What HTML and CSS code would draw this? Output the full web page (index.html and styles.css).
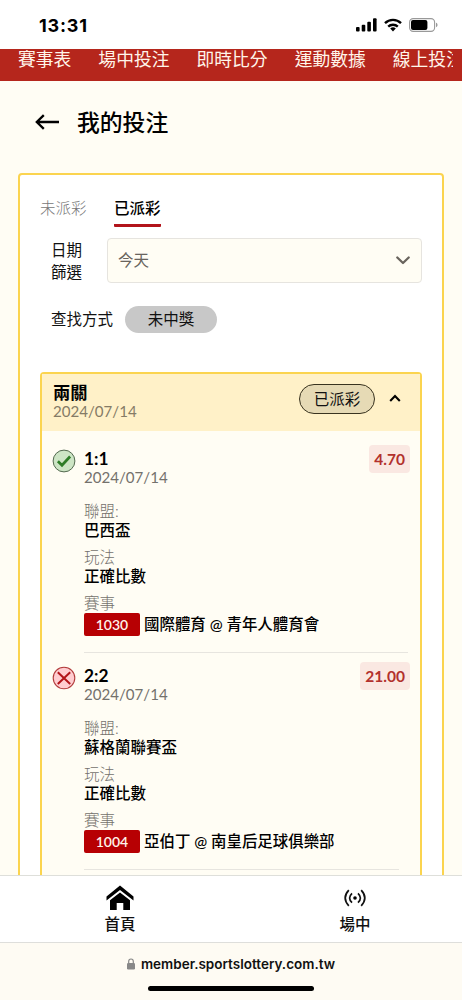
FILE: index.html
```html
<!DOCTYPE html>
<html lang="zh-Hant">
<head>
<meta charset="utf-8">
<title>我的投注</title>
<link rel="stylesheet" href="styles.css">
</head>
<body>
<div class="screen">
  <header class="status">
    <span class="time">13:31</span>
    <span class="indicators">
      <svg width="22" height="14" viewBox="0 0 22 14"><rect x="0" y="9" width="3.6" height="4.5" rx="1"/><rect x="5.7" y="6.8" width="3.6" height="6.7" rx="1"/><rect x="11.3" y="3.7" width="3.6" height="9.8" rx="1"/><rect x="17" y="0.3" width="3.6" height="13.2" rx="1"/></svg>
      <svg width="18" height="14" viewBox="0 0 18 14"><g fill="none" stroke="#000" stroke-width="2.4"><path d="M1 5.1a11.5 11.5 0 0 1 16 0"/><path d="M4.2 8.6a7 7 0 0 1 9.6 0"/></g><path d="M6.2 10.6a4.2 4.2 0 0 1 5.6 0L9 13.5z"/></svg>
      <svg class="battery" width="29" height="14" viewBox="0 0 29 14"><rect x=".6" y=".6" width="25" height="12.8" rx="3.6" fill="none" stroke="#999" stroke-width="1.1"/><rect x="2" y="2.1" width="16.4" height="9.8" rx="2"/><path d="M27 4.8c2 .6 2 3.8 0 4.4z" fill="#999"/></svg>
    </span>
  </header>
  <nav class="topnav"><div class="links"><span>賽事表</span><span>場中投注</span><span>即時比分</span><span>運動數據</span><span>線上投注</span></div></nav>
  <main class="content">
    <div class="title">
      <svg width="25" height="20" viewBox="0 0 25 20"><path d="M24 10H2M8.8 3.1L1.8 10l7 6.9" fill="none" stroke="#000" stroke-width="2.3"/></svg>
      <h1>我的投注</h1>
    </div>
    <section class="panel">
      <div class="tabs"><span class="tab">未派彩</span><span class="tab active">已派彩</span></div>
      <div class="filter">
        <label>日期<br>篩選</label>
        <div class="select"><span>今天</span><svg width="14" height="9" viewBox="0 0 14 9"><path d="M1.3 1.5L7 7l5.7-5.5" fill="none" stroke="#69645d" stroke-width="2.3" stroke-linecap="round" stroke-linejoin="round"/></svg></div>
      </div>
      <div class="search"><span>查找方式</span><span class="chip">未中獎</span></div>
      <article class="bet">
        <header class="bethead">
          <div><div class="kind">兩關</div><div class="date">2024/07/14</div></div>
          <span class="state">已派彩</span>
          <svg width="12" height="8" viewBox="0 0 12 8"><path d="M1.2 6.9L6 2l4.8 4.9" fill="none" stroke="#000" stroke-width="2.1"/></svg>
        </header>
        <section class="leg">
          <svg class="result" width="24" height="24" viewBox="0 0 24 24"><circle cx="12" cy="12" r="10.9" fill="#cde5c5" stroke="#53694f" stroke-width="1"/><path d="M5.9 12.2l4.1 4 8.1-8.7" fill="none" stroke="#2e7d27" stroke-width="2.7"/></svg>
          <div class="detail">
            <div class="score">1:1</div><div class="date">2024/07/14</div>
            <div class="field"><span>聯盟:</span><b>巴西盃</b></div>
            <div class="field"><span>玩法</span><b>正確比數</b></div>
            <div class="field"><span>賽事</span></div>
            <div class="match"><span class="code">1030</span><b>國際體育 @ 青年人體育會</b></div>
          </div>
          <span class="odds">4.70</span>
        </section>
        <section class="leg">
          <svg class="result" width="24" height="24" viewBox="0 0 24 24"><circle cx="12" cy="12" r="10.8" fill="#ffcdd0" stroke="#b23c3c" stroke-width="1.1"/><path d="M5.8 6.3l12.4 11.6M18.2 6.3L5.8 17.9" fill="none" stroke="#b31419" stroke-width="2"/></svg>
          <div class="detail">
            <div class="score">2:2</div><div class="date">2024/07/14</div>
            <div class="field"><span>聯盟:</span><b>蘇格蘭聯賽盃</b></div>
            <div class="field"><span>玩法</span><b>正確比數</b></div>
            <div class="field"><span>賽事</span></div>
            <div class="match"><span class="code">1004</span><b>亞伯丁 @ 南皇后足球俱樂部</b></div>
          </div>
          <span class="odds">21.00</span>
        </section>
      </article>
    </section>
  </main>
  <nav class="tabbar">
    <div class="item">
      <svg width="28" height="26" viewBox="0 0 28 26"><path d="M.5 11.4L14 .5l13.5 10.9v4L14 5.1.5 15.4z"/><path d="M4 15.2L14 7.4l10 7.8V25h-6.7v-7h-6.6v7H4z"/></svg>
      <span>首頁</span>
    </div>
    <div class="item">
      <svg width="22" height="26" viewBox="0 0 22 26"><circle cx="11" cy="13" r="1.8"/><g fill="none" stroke="#111" stroke-width="1.7"><path d="M8 8.3q-4.8 4.7 0 9.4M14 8.3q4.8 4.7 0 9.4M4.8 5.2q-7.2 7.8 0 15.6M17.2 5.2q7.2 7.8 0 15.6"/></g></svg>
      <span>場中</span>
    </div>
  </nav>
  <footer class="address">
    <div class="url"><svg width="8" height="12" viewBox="0 0 8 12"><rect y="5" width="8" height="6.5" rx="1.2" fill="#888"/><path d="M1.7 6V3.3a2.3 2.3 0 0 1 4.6 0V6" fill="none" stroke="#888" stroke-width="1.2"/></svg><span>member.sportslottery.com.tw</span></div>
    <div class="homebar"></div>
  </footer>
</div>
</body>
</html>
```

FILE: styles.css
```css
* { box-sizing: border-box; }
body { margin: 0; }
svg { display: block; flex: none; }
.screen {
  width: 462px; height: 1000px; display: flex; flex-direction: column; overflow: hidden;
  background: #fffdf4; color: #111;
  font: 15.5px/19px Lato, "Noto Sans CJK TC", sans-serif;
}
.status { flex: none; height: 49px; background: #fff; display: flex; justify-content: space-between; padding: 15px 24px 0 39px; }
.time { font: 700 18px/21px Inter, sans-serif; letter-spacing: .8px; color: #000; }
.indicators { display: flex; padding-top: 3px; }
.indicators svg + svg { margin-left: 6px; }
.indicators .battery { margin-left: 7px; }
.topnav { flex: none; height: 32px; background: #b5261c; padding: 0 9px 0 18px; }
.links { display: flex; gap: 27px; overflow: hidden; white-space: nowrap; color: #fff5ea; font-size: 17.8px; font-weight: 400; line-height: 21px; }
.content { flex: 1; min-height: 0; overflow: hidden; padding: 0 18px; }
.title { display: flex; align-items: center; gap: 17px; height: 92px; padding: 0 0 10px 17px; }
h1 { margin: 0; font-size: 22.8px; font-weight: 500; line-height: 30px; color: #000; }
.panel { height: 760px; background: #fff; border: 2px solid #fbd44f; border-radius: 4px; padding: 20px 20px 0; }
.tabs { display: flex; gap: 27.5px; height: 43px; }
.tab { height: 32px; padding-top: 4px; color: #777; font-weight: 300; }
.active { color: #000; font-weight: 500; border-bottom: 3px solid #b2141b; border-radius: 1px; }
.filter { display: flex; padding-left: 11px; }
.filter label { width: 56px; line-height: 22px; padding-top: 1px; }
.select { flex: 1; height: 45px; display: flex; align-items: center; justify-content: space-between; border: 1px solid #e6e4df; border-radius: 4px; background: #fffdf4; padding: 0 11px 0 10px; color: #69645d; }
.search { display: flex; align-items: center; gap: 12px; padding-left: 11px; margin-top: 22px; height: 28px; }
.chip { width: 92px; height: 27px; line-height: 27px; text-align: center; border-radius: 14px; background: #c8c8c8; }
.bet { margin-top: 39px; height: 600px; background: #fffdf4; border: 2px solid #fbd44f; border-radius: 4px; }
.bethead { display: flex; height: 57px; background: #fff1c8; padding: 9px 17px 0 11px; }
.bethead > div { flex: 1; }
.bethead .date { color: #857b66; line-height: 18px; }
.bethead > svg { margin: 11px 2px 0 14px; }
.kind { font-size: 17.3px; font-weight: 700; line-height: 19px; color: #000; }
.state { width: 76px; height: 30px; margin-top: 1px; border: 1.5px solid #39331f; border-radius: 15px; background: #e6dab5; text-align: center; line-height: 29px; }
.leg { display: flex; height: 217px; padding: 14px 10px 0; }
.result { margin: 4px 8px 0 0; }
.detail { flex: 1; height: 208px; margin-right: -39px; padding-top: 4px; border-bottom: 1px solid #e7e5df; }
.score { font-size: 17.3px; font-weight: 700; color: #000; }
.date { font-size: 15.1px; color: #74716c; line-height: 19px; }
.field span, .field b { display: block; }
.field span { color: #74716c; font-weight: 300; }
.field { margin-top: 8px; }
.date + .field { margin-top: 14.5px; }
b { font-weight: 500; color: #000; }
.match { display: flex; align-items: center; gap: 4px; white-space: nowrap; font-size: 15.45px; }
.code { width: 56px; height: 23px; background: #b70003; color: #fff2ea; border-radius: 2px; text-align: center; font-size: 14px; font-weight: 600; line-height: 23px; }
.odds { height: 28px; padding: 0 5px; border-radius: 4px; background: #fae8e2; color: #b2312d; font-size: 15.5px; font-weight: 700; line-height: 29px; }
.tabbar { flex: none; height: 67px; background: #fff; border-top: 1px solid #dedfda; display: flex; padding: 9px 0 0 2px; font-weight: 500; }
.item { flex: none; width: 236px; display: flex; flex-direction: column; align-items: center; line-height: 26px; }
.item svg { height: 26px; }
.item + .item { margin-left: -1px; }
.address { flex: none; height: 58px; border-top: 1px solid #dededb; background: #fefbf3; display: flex; flex-direction: column; align-items: center; }
.url { display: flex; gap: 6px; align-items: center; padding-top: 12px; font: 600 13.5px/18px Inter, sans-serif; }
.homebar { width: 166px; height: 5px; margin-top: 13px; border-radius: 3px; background: #000; }
```
